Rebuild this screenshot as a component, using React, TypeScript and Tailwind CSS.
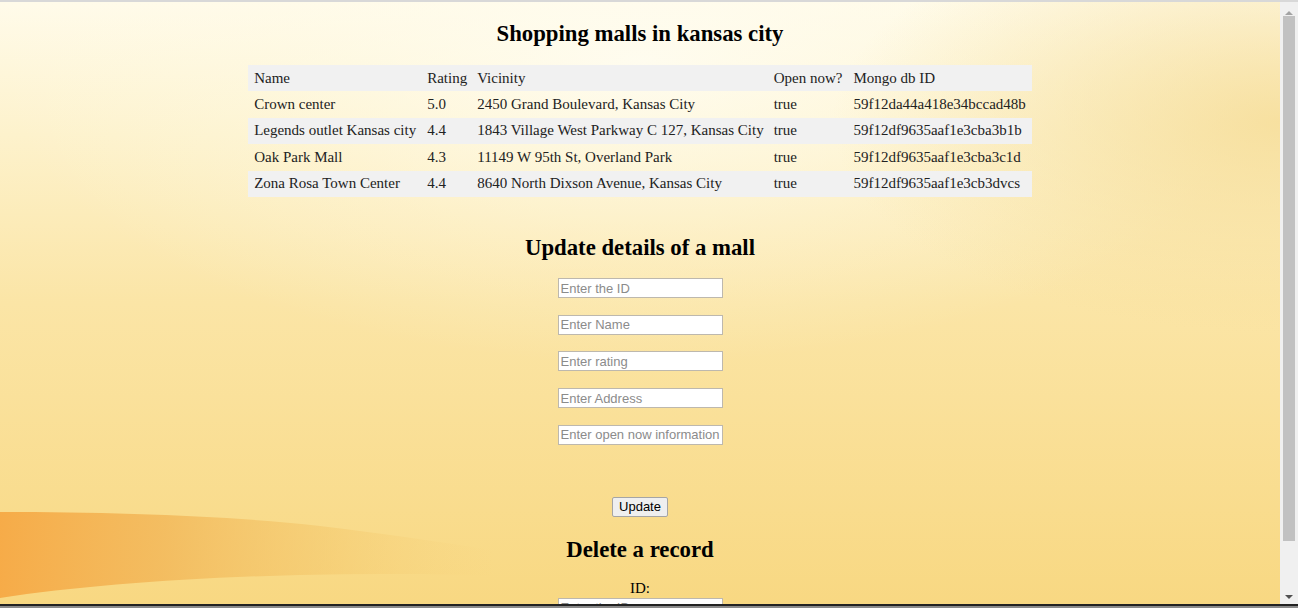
import React from 'react';

const malls = [
  { name: 'Crown center', rating: '5.0', vicinity: '2450 Grand Boulevard, Kansas City', open: 'true', id: '59f12da44a418e34bccad48b' },
  { name: 'Legends outlet Kansas city', rating: '4.4', vicinity: '1843 Village West Parkway C 127, Kansas City', open: 'true', id: '59f12df9635aaf1e3cba3b1b' },
  { name: 'Oak Park Mall', rating: '4.3', vicinity: '11149 W 95th St, Overland Park', open: 'true', id: '59f12df9635aaf1e3cba3c1d' },
  { name: 'Zona Rosa Town Center', rating: '4.4', vicinity: '8640 North Dixson Avenue, Kansas City', open: 'true', id: '59f12df9635aaf1e3cb3dvcs' },
];

const updateFields = ['Enter the ID', 'Enter Name', 'Enter rating', 'Enter Address', 'Enter open now information'];

function Backdrop() {
  return (
    <svg className="absolute inset-0 h-full w-full" viewBox="0 0 1280 602" preserveAspectRatio="none">
      <defs>
        <linearGradient id="sky" x1="0" y1="0" x2="0" y2="1">
          <stop offset="0" stopColor="#fffbea" />
          <stop offset="0.22" stopColor="#fdf2cc" />
          <stop offset="0.5" stopColor="#fbe5a6" />
          <stop offset="1" stopColor="#f8d882" />
        </linearGradient>
        <radialGradient id="glow" cx="0.5" cy="0.1" r="0.5">
          <stop offset="0" stopColor="#fffdf2" stopOpacity="0.85" />
          <stop offset="0.6" stopColor="#fffbe8" stopOpacity="0.3" />
          <stop offset="1" stopColor="#fffbe8" stopOpacity="0" />
        </radialGradient>
        <radialGradient id="corner" cx="1" cy="0.2" r="0.35">
          <stop offset="0" stopColor="#f5da90" stopOpacity="0.75" />
          <stop offset="1" stopColor="#f5da90" stopOpacity="0" />
        </radialGradient>
        <linearGradient id="wave" x1="0" y1="0" x2="1" y2="0">
          <stop offset="0" stopColor="#f6a945" stopOpacity="0.95" />
          <stop offset="0.25" stopColor="#f2b657" stopOpacity="0.8" />
          <stop offset="0.5" stopColor="#f3c466" stopOpacity="0.45" />
          <stop offset="0.75" stopColor="#f6d17a" stopOpacity="0" />
        </linearGradient>
        <linearGradient id="waveTop" x1="0" y1="0" x2="0" y2="1">
          <stop offset="0" stopColor="#fff" stopOpacity="0" />
          <stop offset="1" stopColor="#fff" stopOpacity="1" />
        </linearGradient>
      </defs>
      <rect width="1280" height="602" fill="url(#sky)" />
      <rect width="1280" height="602" fill="url(#glow)" />
      <rect width="1280" height="602" fill="url(#corner)" />
      <path d="M0 510 C120 510 230 514 320 524 C420 536 520 552 660 574 L660 578 C540 574 420 570 300 573 C180 576 80 584 0 596 Z" fill="url(#wave)" />
    </svg>
  );
}

function Scrollbar() {
  return (
    <div className="flex w-[18px] flex-col items-center bg-[#f0f0f0]">
      <div className="flex h-[13px] items-end justify-center">
        <div className="h-0 w-0 border-x-[4px] border-b-[4px] border-x-transparent border-b-[#a3a3a3]" />
      </div>
      <div className="mt-[1px] h-[525px] w-[12px] bg-[#c1c1c1]" />
      <div className="flex-1" />
      <div className="mb-[5px] h-0 w-0 border-x-[4px] border-t-[4px] border-x-transparent border-t-[#505050]" />
    </div>
  );
}

export default function App() {
  return (
    <div className="flex h-[608px] w-full flex-col overflow-hidden bg-white">
      <div className="h-[2px] bg-[#d8d8d8]" />
      <div className="flex min-h-0 flex-1">
        <main className="relative flex-1 overflow-hidden font-['Liberation_Serif',serif] text-[#222]">
          <Backdrop />
          <div className="relative flex flex-col items-center">
            <h2 className="mt-[18px] text-[22.75px] leading-[27px] font-bold text-black">Shopping malls in kansas city</h2>
            <table className="mt-[18px] border-collapse text-[15px] leading-[17.4px]">
              <thead>
                <tr className="bg-[#f1f1f1]">
                  <th className="px-[6px] py-[4.5px] text-left font-normal">Name</th>
                  <th className="px-[5px] py-[4.5px] text-left font-normal">Rating</th>
                  <th className="px-[5px] py-[4.5px] text-left font-normal">Vicinity</th>
                  <th className="px-[5px] py-[4.5px] text-left font-normal">Open now?</th>
                  <th className="px-[6px] py-[4.5px] text-left font-normal">Mongo db ID</th>
                </tr>
              </thead>
              <tbody>
                {malls.map((m, i) => (
                  <tr key={m.id} className={i % 2 === 1 ? 'bg-[#f1f1f1]' : ''}>
                    <td className="px-[6px] py-[4.5px]">{m.name}</td>
                    <td className="px-[5px] py-[4.5px]">{m.rating}</td>
                    <td className="px-[5px] py-[4.5px]">{m.vicinity}</td>
                    <td className="px-[5px] py-[4.5px]">{m.open}</td>
                    <td className="px-[6px] py-[4.5px]">{m.id}</td>
                  </tr>
                ))}
              </tbody>
            </table>

            <h2 className="mt-[37px] text-[22.75px] leading-[27px] font-bold text-black">Update details of a mall</h2>
            <div className="mt-[17px] flex flex-col gap-[16.7px]">
              {updateFields.map((p) => (
                <input
                  key={p}
                  placeholder={p}
                  className="h-[20px] w-[165px] border border-[#bdb8ae] bg-white px-[2px] font-['Liberation_Sans',Arial,sans-serif] text-[13px] text-black outline-none placeholder:text-[#8b8b8b]"
                />
              ))}
            </div>
            <button className="mt-[52px] h-[20px] rounded-[2px] border border-[#a5a5a5] bg-[#efefef] px-[6px] font-['Liberation_Sans',Arial,sans-serif] text-[13px] leading-none text-black">
              Update
            </button>

            <h2 className="mt-[19px] text-[22.75px] leading-[27px] font-bold text-black">Delete a record</h2>
            <div className="mt-[17px] text-[15px] leading-[17px] text-black">ID:</div>
            <input
              placeholder="Enter the ID"
              className="mt-[1px] h-[20px] w-[165px] border border-[#bdb8ae] bg-white px-[2px] font-['Liberation_Sans',Arial,sans-serif] text-[13px] outline-none placeholder:text-[#8b8b8b]"
            />
          </div>
        </main>
        <Scrollbar />
      </div>
      <div className="h-[4px] border-t-2 border-[#222] bg-[#8a8a8a]" />
    </div>
  );
}
